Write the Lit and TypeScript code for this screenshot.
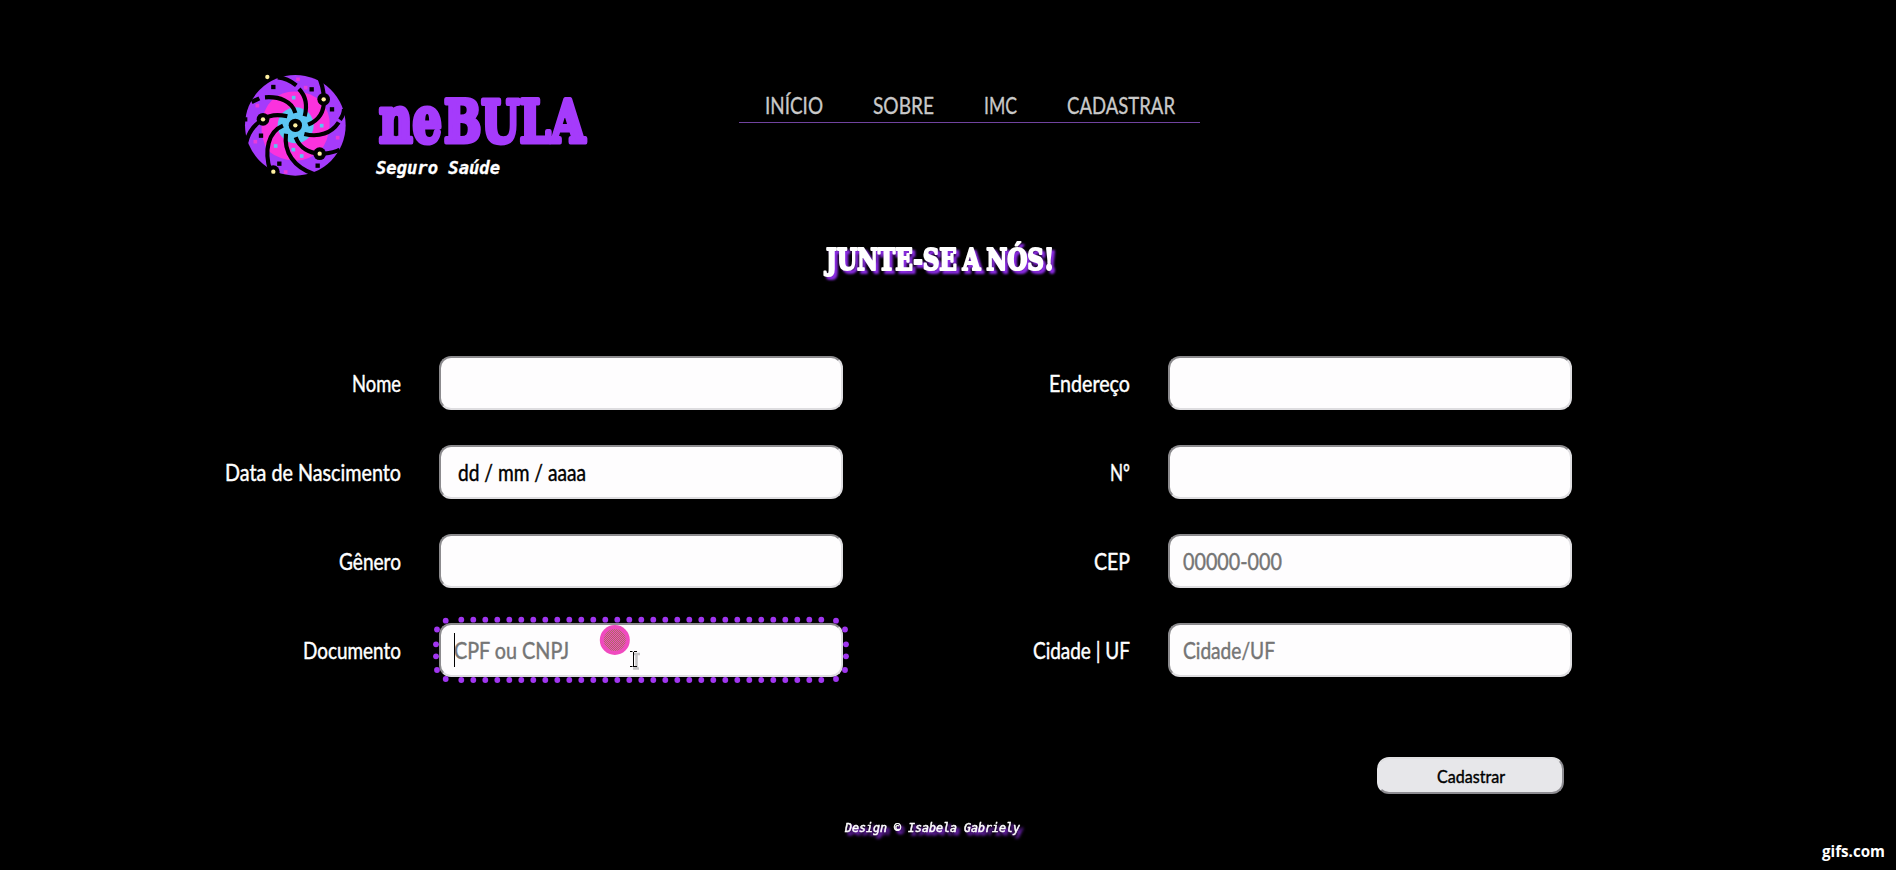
import { LitElement, html, css, svg } from "lit";
import { customElement, property } from "lit/decorators.js";

/** One line of text drawn to an exact width on its baseline. */
@customElement("fit-text")
class FitText extends LitElement {
  @property() text = "";
  @property({ type: Number }) width = 100;
  @property({ type: Number }) height = 30;
  @property({ type: Number }) baseline = 22;

  static styles = css`
    :host { display: block; flex: none; }
    svg { display: block; overflow: visible; }
    text { fill: currentColor; stroke: currentColor; stroke-width: var(--heft, 0); stroke-linejoin: round; white-space: pre; }
  `;

  render() {
    return html`<svg width=${this.width} height=${this.height}>
      <text x="0" y=${this.baseline} textLength=${this.width} lengthAdjust="spacingAndGlyphs">${this.text}</text>
    </svg>`;
  }
}

@customElement("nebula-logo")
class NebulaLogo extends LitElement {
  static styles = css`
    :host { display: block; width: 120px; height: 120px; }
    svg { display: block; }
    .arm { fill: none; stroke: #000; stroke-width: 12.5; stroke-linecap: butt; }
    .ring { fill: #000; }
    .star { fill: #fff0a0; }
  `;

  render() {
    const arms = [
      "M90 97C132 94 172 108 181 144", "M192 72C213 94 217 124 209 154",
      "M219 179C252 166 268 140 267 103C266 75 259 50 249 30",
      "M208 207C252 218 290 204 311 172", "M315 164C323 153 327 142 327 132",
      "M182 217C194 250 225 264 254 266C278 268 292 262 314 255",
      "M153 206C146 262 176 306 238 328", "M144 182C100 200 86 256 106 318",
      "M157 154C128 147 104 149 84 163C56 180 40 203 34 232",
      "M50 111L73 100", "M128 37C152 39 168 48 184 61", "M28 163L37 163",
    ];
    const nodes = [[84, 163], [266, 103], [254, 266], [115, 320]];
    const dark = [[115, 66], [230, 73], [291, 133], [78, 212], [133, 296], [248, 302]];
    const blue = [[176, 98], [260, 182], [122, 243], [175, 254], [200, 273]];
    const pink = [[189, 43], [67, 122], [61, 230], [308, 218], [152, 321], [212, 68]];
    const sq = (list: number[][], s: number, c: string) =>
      list.map(([x, y]) => svg`<rect x=${x - s / 2} y=${y - s / 2} width=${s} height=${s} fill=${c}></rect>`);
    return html`<svg width="120" height="120" viewBox="0 0 360 360">
      <defs><clipPath id="disc"><circle cx="181" cy="181" r="156"></circle></clipPath></defs>
      <circle cx="181" cy="181" r="151" fill="#a53bfb"></circle>
      <path d="M112 104Q145 76 188 80Q230 82 258 110Q286 140 284 182Q280 230 256 256Q222 288 180 287Q132 284 100 258Q76 222 80 178Q84 132 112 104Z" fill="#fb32dd"></path>
      <circle cx="182" cy="181" r="54" fill="#5bc6f2"></circle>
      <g clip-path="url(#disc)">${arms.map((d) => svg`<path class="arm" d=${d}></path>`)}</g>
      ${sq(dark, 13, "#000")}${sq(blue, 11, "#5bc6f2")}${sq(pink, 11, "#e83bdc")}
      ${nodes.map(([x, y]) => svg`<circle class="ring" cx=${x} cy=${y} r="19"></circle><circle class="star" cx=${x} cy=${y} r="6.5"></circle>`)}
      <circle class="ring" cx="181" cy="181" r="20"></circle>
      <circle class="star" cx="181" cy="181" r="6.5"></circle>
      <circle class="star" cx="97" cy="36" r="6.5"></circle>
    </svg>`;
  }
}

type Field = { label: string; w: number; hint?: string; hw?: number; cls?: string; focus?: boolean };

@customElement("app-root")
class AppRoot extends LitElement {
  static styles = css`
    :host {
      display: block; position: relative; box-sizing: border-box;
      width: 1896px; height: 870px; overflow: hidden; background: #000; color: #fff;
      font: 24px Lato, "Open Sans", sans-serif;
    }
    header { display: flex; height: 185px; padding: 65px 0 0 235px; box-sizing: border-box; }
    .brand { padding: 15px 0 0 23px; width: 361px; box-sizing: border-box; }
    .name { display: flex; color: #a53bfb; font: bold 58px "DejaVu Serif", serif; --heft: 5px; }
    .small { font-size: 63px; }
    .name .small { margin-left: 1px; }
    .name .big { margin-left: 2px; }
    .slogan { font: italic bold 17px "DejaVu Sans Mono", monospace; margin-left: -2px; --heft: .3px; }
    nav {
      display: flex; margin-left: 23px; height: 58px; width: 461px; box-sizing: border-box;
      padding: 24px 0 0 26px; border-bottom: 1px solid #70439f; color: #c9c9c9; --heft: .35px;
    }
    .n2 { margin-left: 50px; } .n3 { margin-left: 50px; } .n4 { margin-left: 50px; }
    h1 { margin: 0; padding: 55px 0 0 826px; height: 171px; box-sizing: border-box;
      font: bold 30px "DejaVu Serif", serif; word-spacing: -3px; --heft: 2.2px; filter: drop-shadow(3px 3px 1px #8a2be2); }
    form { display: grid; grid-template-columns: 843px 729px; grid-auto-rows: 54px; row-gap: 35px; grid-auto-flow: row; --heft: .45px; }
    .field { display: flex; justify-content: flex-end; }
    .label { margin-right: 38px; }
    .box {
      width: 404px; height: 54px; box-sizing: border-box; border: 2px solid; border-radius: 12px;
      border-color: #8c8b8e #dedde0 #dedde0 #8c8b8e; background: #fefdfe; color: #757575; padding-left: 13px; position: relative;
    }
    .date { color: #000; padding-left: 17px; }
    .dots { position: absolute; left: -11px; top: -11px; fill: #a136f0; }
    .caret { position: absolute; left: 13px; top: 8px; width: 1px; height: 34px; background: #000; }
    .pointer { position: absolute; left: 157px; top: -2px; }
    .shade { stroke: #c4c3c5; stroke-width: 2.5; fill: none; }
    .beam { stroke: #000; stroke-width: 1; fill: none; }
    .actions { padding: 80px 0 0 1377px; height: 117px; box-sizing: border-box; }
    button {
      width: 187px; height: 37px; padding: 0; border-radius: 12px; border: 2px solid; display: flex; justify-content: center;
      border-color: #e0e0e2 #8d8c91 #8d8c91 #e6e6e9; background: #e7e7ea; color: #000; font: 18px Lato, sans-serif; --heft: .4px;
    }
    footer { display: flex; padding: 19px 0 0 845px; font: italic 11.7px "DejaVu Sans Mono", monospace; }
    .credit { --heft: .5px; filter: drop-shadow(3px 3px 1.5px #8a2be2); }
    .mark { margin: 10px 0 0 802px; font: bold 16px "Open Sans", sans-serif; }
  `;

  private fields: Field[] = [
    { label: "Nome", w: 49 }, { label: "Endereço", w: 81 },
    { label: "Data de Nascimento", w: 176, hint: "dd / mm / aaaa", hw: 128, cls: "date" }, { label: "Nº", w: 20 },
    { label: "Gênero", w: 62 }, { label: "CEP", w: 36, hint: "00000-000", hw: 99 },
    { label: "Documento", w: 98, hint: "CPF ou CNPJ", hw: 115, focus: true }, { label: "Cidade | UF", w: 97, hint: "Cidade/UF", hw: 92 },
  ];

  private focusDecor() {
    const pts: number[][] = [];
    for (let i = 0; i < 31; i++) pts.push([31.3 + i * 12, 5.7], [31.3 + i * 12, 66]);
    for (const [x, y] of [[15.7, 6.7], [406, 6.7], [15.7, 65], [406, 65], [7, 15.5], [6, 30.3], [6, 42.3], [7, 56], [415, 15.5], [416, 30.3], [416, 42.3], [415, 56]]) pts.push([x, y]);
    return html`
      <svg class="dots" width="422" height="72">${pts.map(([x, y]) => svg`<circle cx=${x} cy=${y} r="2.9"></circle>`)}</svg>
      <span class="caret"></span>
      <svg class="pointer" width="50" height="54">
        <defs><pattern id="grain" width="2" height="2" patternUnits="userSpaceOnUse">
          <rect width="2" height="2" fill="#f04abf"></rect>
          <rect width="1" height="1" fill="#ad6f62"></rect><rect x="1" y="1" width="1" height="1" fill="#ad6f62"></rect>
        </pattern></defs>
        <circle cx="16.800" cy="17" r="15" fill="#f04abf"></circle>
        <circle cx="16.800" cy="17" r="11" fill="url(#grain)"></circle>
        <path class="shade" d="M36 31h6M38.500 31v14M35 45.500h6"></path>
        <path class="beam" d="M32 28.500h2.500M36 28.500h3M35.500 29v15M32 43.500h2.500M36 43.500h3"></path>
      </svg>`;
  }

  render() {
    return html`
      <header>
        <nebula-logo></nebula-logo>
        <div class="brand">
          <div class="name">
            <fit-text class="small" text="ne" width="63" height="80" baseline="62"></fit-text>
            <fit-text class="big" text="BULA" width="141" height="80" baseline="62"></fit-text>
          </div>
          <fit-text class="slogan" text="Seguro Saúde" width="124" height="20" baseline="14"></fit-text>
        </div>
        <nav>
          <fit-text text="INÍCIO" width="58" baseline="25"></fit-text>
          <fit-text class="n2" text="SOBRE" width="61" baseline="25"></fit-text>
          <fit-text class="n3" text="IMC" width="33" baseline="25"></fit-text>
          <fit-text class="n4" text="CADASTRAR" width="108" baseline="25"></fit-text>
        </nav>
      </header>
      <h1><fit-text text="JUNTE-SE A NÓS!" width="228" height="40" baseline="30"></fit-text></h1>
      <form>
        ${this.fields.map((f) => html`<div class="field">
          <fit-text class="label" text=${f.label} width=${f.w} height="54" baseline="36"></fit-text>
          <div class="box ${f.cls ?? ""}">
            ${f.hint ? html`<fit-text text=${f.hint} width=${f.hw} height="48" baseline="34"></fit-text>` : ""}
            ${f.focus ? this.focusDecor() : ""}
          </div>
        </div>`)}
      </form>
      <div class="actions"><button type="button"><fit-text text="Cadastrar" width="68" height="33" baseline="24"></fit-text></button></div>
      <footer>
        <fit-text class="credit" text="Design © Isabela Gabriely" width="175" height="24" baseline="19"></fit-text>
        <fit-text class="mark" text="gifs.com" width="63" height="24" baseline="34"></fit-text>
      </footer>
    `;
  }
}
